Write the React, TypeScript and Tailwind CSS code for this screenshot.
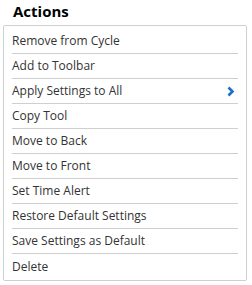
import React from 'react';

const items = [
  'Remove from Cycle',
  'Add to Toolbar',
  'Apply Settings to All',
  'Copy Tool',
  'Move to Back',
  'Move to Front',
  'Set Time Alert',
  'Restore Default Settings',
  'Save Settings as Default',
  'Delete',
];

export default function App() {
  return (
    <div className="w-[252px] h-[285px] bg-white font-['Open_Sans',sans-serif] text-[#333]">
      <div className="pl-[13px] pt-[1px] h-[25px] text-[15px] leading-[20px] font-bold text-black">Actions</div>
      <div className="ml-[3px] w-[244px] border border-[#cfcfcf] rounded-[2px] pt-[3px] pb-[1px]">
        {items.map((label, i) => (
          <div key={label} className="px-[8px]">
            <div
              className={`h-[25px] flex items-center justify-between text-[12px] ${
                i < items.length - 1 ? 'border-b border-[#cfcfcf]' : ''
              }`}
            >
              <span>{label}</span>
              {label === 'Apply Settings to All' && (
                <svg width="8" height="11" viewBox="0 0 8 11" className="mr-[3px]">
                  <path d="M1.5 1.5 L5.5 5.5 L1.5 9.5" fill="none" stroke="#1b70c4" strokeWidth="2.6" />
                </svg>
              )}
            </div>
          </div>
        ))}
      </div>
    </div>
  );
}
